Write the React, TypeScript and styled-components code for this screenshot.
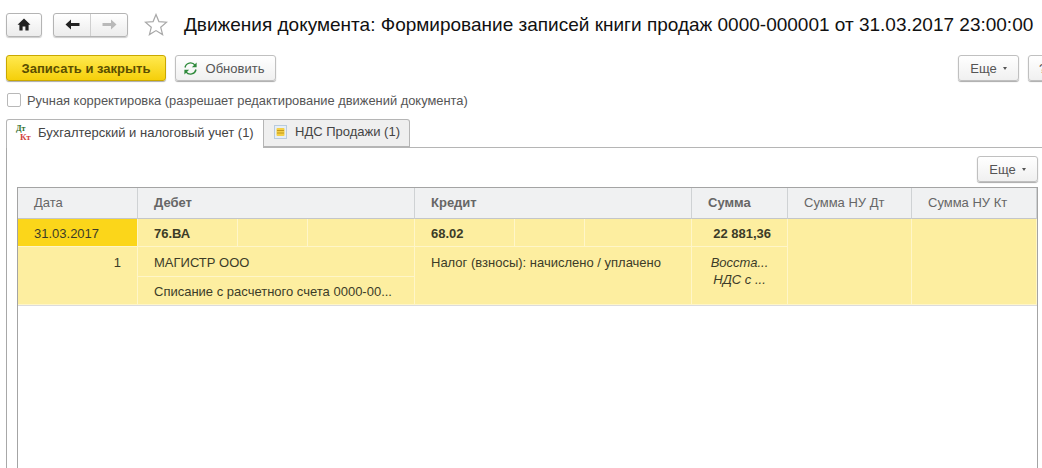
import styled, { createGlobalStyle } from "styled-components";

const GlobalStyle = createGlobalStyle`
  html, body {
    margin: 0;
    padding: 0;
    width: 1042px;
    height: 468px;
    overflow: hidden;
    background: #fff;
    font-family: "Liberation Sans", Arial, sans-serif;
  }
`;

const Page = styled.div`
  width: 1042px;
  height: 468px;
  overflow: hidden;
  display: flex;
  flex-direction: column;
  padding: 12px 0 0 6px;
  box-sizing: border-box;
`;

const TitleBar = styled.div`
  display: flex;
  align-items: center;
  height: 25px;
`;

const NavGroup = styled.div`
  display: flex;
  height: 24px;
  margin-right: 11px;
  border: 1px solid #b4b4b4;
  border-radius: 3px;
  box-sizing: border-box;
  background: linear-gradient(#fff, #ececec);
  box-shadow: 0 1px 1px #ccc;
`;

const NavCell = styled.div<{ $w: number; $divider?: boolean }>`
  width: ${(p) => p.$w}px;
  display: flex;
  align-items: center;
  justify-content: center;
  border-left: ${(p) => (p.$divider ? "1px solid #cfcfcf" : "none")};
`;

const Star = styled.svg`
  margin: 0 16px 0 5px;
  flex-shrink: 0;
`;

const Title = styled.h1`
  margin: 0;
  font-size: 19px;
  font-weight: 400;
  line-height: 25px;
  color: #111;
  white-space: nowrap;
`;

const CommandBar = styled.div`
  display: flex;
  align-items: center;
  gap: 9px;
  height: 26px;
  margin-top: 18px;
`;

const Button = styled.div<{ $w: number; $primary?: boolean }>`
  flex-shrink: 0;
  width: ${(p) => p.$w}px;
  height: 26px;
  box-sizing: border-box;
  display: flex;
  align-items: center;
  justify-content: center;
  gap: 6px;
  border: 1px solid ${(p) => (p.$primary ? "#c9a800" : "#c0c0c0")};
  border-radius: 3px;
  font-size: 13px;
  font-weight: ${(p) => (p.$primary ? 700 : 400)};
  white-space: nowrap;
  color: ${(p) => (p.$primary ? "#5a4e00" : "#555")};
  background: ${(p) =>
    p.$primary ? "linear-gradient(#ffe94f, #f5cf0a)" : "linear-gradient(#fff, #f0f0f0)"};
  box-shadow: 0 1px 1px #aaa;
`;

const RefreshButton = styled(Button)`
  gap: 8px;
  padding-right: 4px;
`;

// runs past the right edge of the window, as in the reference
const HelpButton = styled(Button)`
  justify-content: flex-start;
  padding-left: 10px;
  margin-right: -16px;
`;

const Caret = styled.span`
  width: 0;
  height: 0;
  margin-top: 1px;
  border-left: 2.5px solid transparent;
  border-right: 2.5px solid transparent;
  border-top: 3px solid #555;
`;

const Spacer = styled.div`
  flex: 1;
  min-width: 0;
`;

const CheckRow = styled.label`
  display: flex;
  align-items: center;
  gap: 6px;
  height: 16px;
  margin: 11px 0 0 1px;
  font-size: 12.9px;
  color: #555;
`;

const CheckBox = styled.span`
  width: 14px;
  height: 14px;
  box-sizing: border-box;
  border: 1px solid #b8b8b8;
  border-radius: 2px;
  background: #fff;
`;

const TabStrip = styled.div`
  display: flex;
  height: 29px;
  margin-top: 11px;
  border-bottom: 1px solid #b5b5b5;
  box-sizing: border-box;
`;

const Tab = styled.div<{ $w: number; $active?: boolean }>`
  width: ${(p) => p.$w}px;
  height: ${(p) => (p.$active ? 29 : 28)}px;
  box-sizing: border-box;
  display: flex;
  align-items: center;
  gap: ${(p) => (p.$active ? 6 : 8)}px;
  padding-left: ${(p) => (p.$active ? 9 : 10)}px;
  padding-bottom: 3px;
  font-size: 13px;
  color: #444;
  background: ${(p) => (p.$active ? "#fff" : "#efefef")};
  border: 1px solid #b5b5b5;
  border-left: ${(p) => (p.$active ? "1px solid #b5b5b5" : "none")};
  border-bottom: ${(p) => (p.$active ? "none" : "1px solid #b5b5b5")};
  border-radius: ${(p) => (p.$active ? "3px 0 0 0" : "0 3px 0 0")};
  white-space: nowrap;
`;

const DtKt = styled.span`
  width: 16px;
  height: 16px;
  display: flex;
  flex-direction: column;
  font-weight: 700;
  line-height: 8px;
  font-family: "Liberation Serif", serif;
`;

const Dt = styled.span`
  font-size: 8px;
  color: #2f6e2c;
`;

const Kt = styled.span`
  font-size: 9px;
  color: #d2453f;
  padding-left: 4px;
`;

const TabPanel = styled.div`
  flex: 1;
  border-left: 1px solid #a8a8a8;
  padding: 8px 4px 0 10px;
  display: flex;
  flex-direction: column;
`;

const TableBar = styled.div`
  display: flex;
  justify-content: flex-end;
  height: 26px;
  margin-bottom: 5px;
`;

const Table = styled.div`
  flex: 1;
  box-sizing: border-box;
  border: 1px solid #a4a4a4;
  border-bottom: none;
  background: #fff;
`;

const Grid = styled.div`
  display: grid;
  grid-template-columns: 120px 277px 277px 96px 124px 1fr;
  grid-template-rows: 31px 28px 30px 28px;
  border-bottom: 1px solid #dcdcdc;
`;

const HeadCell = styled.div<{ $bold?: boolean }>`
  display: flex;
  align-items: center;
  padding: 0 0 2px 16px;
  background: #f0f1f2;
  border-right: 1px solid #cfd2d4;
  border-bottom: 1px solid #c4c6c8;
  box-sizing: border-box;
  font-size: 13px;
  font-weight: ${(p) => (p.$bold ? 700 : 400)};
  color: #666;
`;

const Cell = styled.div<{
  $col: string;
  $row: string;
  $top?: number;
  $bold?: boolean;
  $selected?: boolean;
  $right?: boolean;
}>`
  grid-column: ${(p) => p.$col};
  grid-row: ${(p) => p.$row};
  box-sizing: border-box;
  display: flex;
  justify-content: ${(p) => (p.$right ? "flex-end" : "flex-start")};
  padding: ${(p) => p.$top ?? 7}px ${(p) => (p.$right ? 16 : 0)}px 0 ${(p) => (p.$right ? 0 : 16)}px;
  background: ${(p) => (p.$selected ? "#fbd61a" : "#fdeea0")};
  border-right: 1px solid #fff6c8;
  border-bottom: 1px solid #fff6c8;
  font-size: 13px;
  line-height: 15px;
  font-weight: ${(p) => (p.$bold ? 700 : 400)};
  color: #3c3c28;
  white-space: nowrap;
  overflow: hidden;
`;

const NoteCell = styled(Cell)`
  flex-direction: column;
  align-items: center;
  justify-content: flex-start;
  padding: 7px 0 0;
  font-style: italic;
  line-height: 17px;
`;

const SubCells = styled.div<{ $col: string }>`
  grid-column: ${(p) => p.$col};
  grid-row: 2;
  display: grid;
  grid-template-columns: 100px 70px 1fr;
  box-sizing: border-box;
  background: #fdeea0;
  border-right: 1px solid #fff6c8;
  border-bottom: 1px solid #fff6c8;
`;

const SubCell = styled.div`
  padding: 7px 0 0 16px;
  box-sizing: border-box;
  border-right: 1px solid #fff6c8;
  font-size: 13px;
  line-height: 15px;
  font-weight: 700;
  color: #3c3c28;
  &:last-child {
    border-right: none;
  }
`;

const HomeIcon = () => (
  <svg width="14" height="13" viewBox="0 0 14 13">
    <path d="M7 0.5 L0.5 6.8 L2.4 6.8 L2.4 12.5 L5.6 12.5 L5.6 8.5 L8.4 8.5 L8.4 12.5 L11.6 12.5 L11.6 6.8 L13.5 6.8 Z" fill="#222" />
  </svg>
);

const ArrowIcon = ({ color, flip }: { color: string; flip?: boolean }) => (
  <svg width="15" height="11" viewBox="0 0 15 11" transform={flip ? "scale(-1 1)" : undefined}>
    <path d="M0.5 5.5 L6 0.5 L6 4 L14.5 4 L14.5 7 L6 7 L6 10.5 Z" fill={color} />
  </svg>
);

const RefreshIcon = () => (
  <svg width="15" height="15" viewBox="0 0 15 15" fill="none">
    <path d="M2 6.5 A5.6 5.6 0 0 1 12 4.2" stroke="#2f8a3c" strokeWidth="1.4" />
    <path d="M13.6 1.4 L13.6 6.2 L8.9 6.2 Z" fill="#2f8a3c" />
    <path d="M13 8.5 A5.6 5.6 0 0 1 3 10.8" stroke="#2f8a3c" strokeWidth="1.4" />
    <path d="M1.4 13.6 L1.4 8.8 L6.1 8.8 Z" fill="#2f8a3c" />
  </svg>
);

const CoinIcon = () => (
  <svg width="13" height="14" viewBox="0 0 13 14">
    <rect x="0.5" y="0.5" width="12" height="13" fill="#e6eef7" stroke="#b9cbdd" />
    <rect x="2.5" y="3" width="8" height="8" rx="1" fill="#f4cf45" />
    <path d="M3 5.5 L10 5.5 M3 8 L10 8" stroke="#b58a12" strokeWidth="0.8" />
  </svg>
);

const App = () => {
  return (
    <>
      <GlobalStyle />
      <Page>
        <TitleBar>
          <NavGroup>
            <NavCell $w={34}>
              <HomeIcon />
            </NavCell>
          </NavGroup>
          <NavGroup>
            <NavCell $w={36}>
              <ArrowIcon color="#222" />
            </NavCell>
            <NavCell $w={36} $divider>
              <ArrowIcon color="#b9b9b9" flip />
            </NavCell>
          </NavGroup>
          <Star width="24" height="23" viewBox="0 0 24 23" fill="none">
            <path
              d="M12 1.5 L14.9 8.6 L22.6 9.2 L16.7 14.2 L18.6 21.6 L12 17.6 L5.4 21.6 L7.3 14.2 L1.4 9.2 L9.1 8.6 Z"
              stroke="#a8a8a8"
              strokeWidth="1.2"
            />
          </Star>
          <Title>Движения документа: Формирование записей книги продаж 0000-000001 от 31.03.2017 23:00:00</Title>
        </TitleBar>

        <CommandBar>
          <Button $w={160} $primary>
            Записать и закрыть
          </Button>
          <RefreshButton $w={101}>
            <RefreshIcon />
            Обновить
          </RefreshButton>
          <Spacer />
          <Button $w={61}>
            Еще <Caret />
          </Button>
          <HelpButton $w={30}>?</HelpButton>
        </CommandBar>

        <CheckRow>
          <CheckBox />
          Ручная корректировка (разрешает редактирование движений документа)
        </CheckRow>

        <TabStrip>
          <Tab $w={258} $active>
            <DtKt>
              <Dt>Дт</Dt>
              <Kt>Кт</Kt>
            </DtKt>
            Бухгалтерский и налоговый учет (1)
          </Tab>
          <Tab $w={146}>
            <CoinIcon />
            НДС Продажи (1)
          </Tab>
        </TabStrip>

        <TabPanel>
          <TableBar>
            <Button $w={61}>
              Еще <Caret />
            </Button>
          </TableBar>
          <Table>
            <Grid>
              <HeadCell>Дата</HeadCell>
              <HeadCell $bold>Дебет</HeadCell>
              <HeadCell $bold>Кредит</HeadCell>
              <HeadCell $bold>Сумма</HeadCell>
              <HeadCell>Сумма НУ Дт</HeadCell>
              <HeadCell>Сумма НУ Кт</HeadCell>

              <Cell $col="1" $row="2" $selected>
                31.03.2017
              </Cell>
              <SubCells $col="2">
                <SubCell>76.ВА</SubCell>
                <SubCell />
                <SubCell />
              </SubCells>
              <SubCells $col="3">
                <SubCell>68.02</SubCell>
                <SubCell />
                <SubCell />
              </SubCells>
              <Cell $col="4" $row="2" $bold $right>
                22 881,36
              </Cell>
              <Cell $col="5" $row="2 / 5" />
              <Cell $col="6" $row="2 / 5" />

              <Cell $col="1" $row="3 / 5" $top={8} $right>
                1
              </Cell>
              <Cell $col="2" $row="3" $top={8}>
                МАГИСТР ООО
              </Cell>
              <Cell $col="2" $row="4">
                Списание с расчетного счета 0000-00...
              </Cell>
              <Cell $col="3" $row="3 / 5" $top={8}>
                Налог (взносы): начислено / уплачено
              </Cell>
              <NoteCell $col="4" $row="3 / 5">
                <span>Восста...</span>
                <span>НДС с ...</span>
              </NoteCell>
            </Grid>
          </Table>
        </TabPanel>
      </Page>
    </>
  );
};

export default App;
